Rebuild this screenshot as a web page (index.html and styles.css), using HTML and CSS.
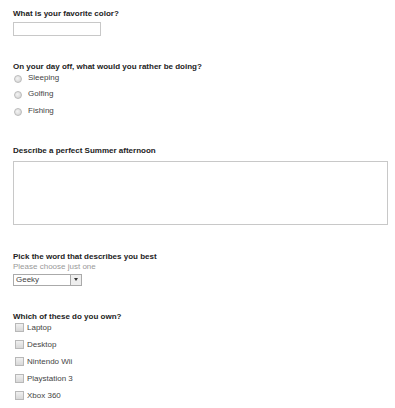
FILE: index.html
```html
<!DOCTYPE html>
<html>
<head>
<meta charset="utf-8">
<link rel="stylesheet" href="styles.css">
</head>
<body>
<form class="form">
  <div class="q q1">
    <div class="label">What is your favorite color?</div>
    <input class="text" type="text">
  </div>
  <div class="q q2">
    <div class="label">On your day off, what would you rather be doing?</div>
    <div class="opts radios">
      <label class="opt"><span class="radio"></span>Sleeping</label>
      <label class="opt"><span class="radio"></span>Golfing</label>
      <label class="opt"><span class="radio"></span>Fishing</label>
    </div>
  </div>
  <div class="q q3">
    <div class="label">Describe a perfect Summer afternoon</div>
    <div class="area"></div>
  </div>
  <div class="q q4">
    <div class="label">Pick the word that describes you best</div>
    <div class="hint">Please choose just one</div>
    <div class="select"><span class="sel-val">Geeky</span><span class="sel-btn"><span class="tri"></span></span></div>
  </div>
  <div class="q q5">
    <div class="label">Which of these do you own?</div>
    <div class="opts checks">
      <label class="opt"><span class="check"></span>Laptop</label>
      <label class="opt"><span class="check"></span>Desktop</label>
      <label class="opt"><span class="check"></span>Nintendo Wii</label>
      <label class="opt"><span class="check"></span>Playstation 3</label>
      <label class="opt"><span class="check"></span>Xbox 360</label>
    </div>
  </div>
</form>
</body>
</html>
```
FILE: styles.css
```css
html, body {
  margin: 0;
  padding: 0;
  background: #fff;
}
body {
  font-family: "Liberation Sans", Arial, sans-serif;
  font-size: 8px;
  color: #333;
}
.form {
  display: flex;
  flex-direction: column;
  padding: 8px 0 0 13px;
}
.label {
  font-weight: bold;
  color: #222;
  line-height: 10px;
  height: 10px;
}
.q1 .label { margin-top: 1px; }
.q1 .text {
  display: block;
  margin: 3px 0 0;
  padding: 0;
  width: 88px;
  height: 14px;
  box-sizing: border-box;
  border: 1px solid #c8c8c8;
  background: #fff;
}
.q2 { margin-top: 26px; }
.opts {
  display: flex;
  flex-direction: column;
}
.opt {
  display: flex;
  align-items: center;
  height: 16.5px;
  color: #444;
}
.radios .opt:first-child { margin-top: -3px; }
.radio {
  width: 8px;
  height: 8px;
  border-radius: 50%;
  border: 1px solid #bbb;
  background: radial-gradient(circle at 40% 40%, #f4f4f4, #d0d0d0);
  box-sizing: border-box;
  margin: 3px 6px 0 1px;
}
.q3 { margin-top: 27px; }
.area {
  margin-top: 5px;
  width: 375px;
  height: 64px;
  box-sizing: border-box;
  border: 1px solid #c8c8c8;
  background: #fff;
}
.q4 { margin-top: 27px; }
.hint {
  color: #999;
  line-height: 10px;
  height: 10px;
}
.select {
  margin-top: 2px;
  width: 69px;
  height: 12px;
  box-sizing: border-box;
  border: 1px solid #aaa;
  display: flex;
  background: #fff;
}
.sel-val {
  flex: 1;
  line-height: 10px;
  padding-left: 2px;
  color: #444;
}
.sel-btn {
  width: 10px;
  border-left: 1px solid #aaa;
  background: #eee;
  display: flex;
  align-items: center;
  justify-content: center;
}
.tri {
  width: 0;
  height: 0;
  border-left: 2px solid transparent;
  border-right: 2px solid transparent;
  border-top: 3px solid #333;
}
.q5 { margin-top: 26px; }
.checks .opt {
  height: 17px;
}
.checks .opt:first-child { margin-top: -3px; }
.check {
  width: 9px;
  height: 9px;
  box-sizing: border-box;
  border: 1px solid #b8b8b8;
  background: linear-gradient(#f0f0f0, #d8d8d8);
  margin: 0 3px 0 2px;
}
```
